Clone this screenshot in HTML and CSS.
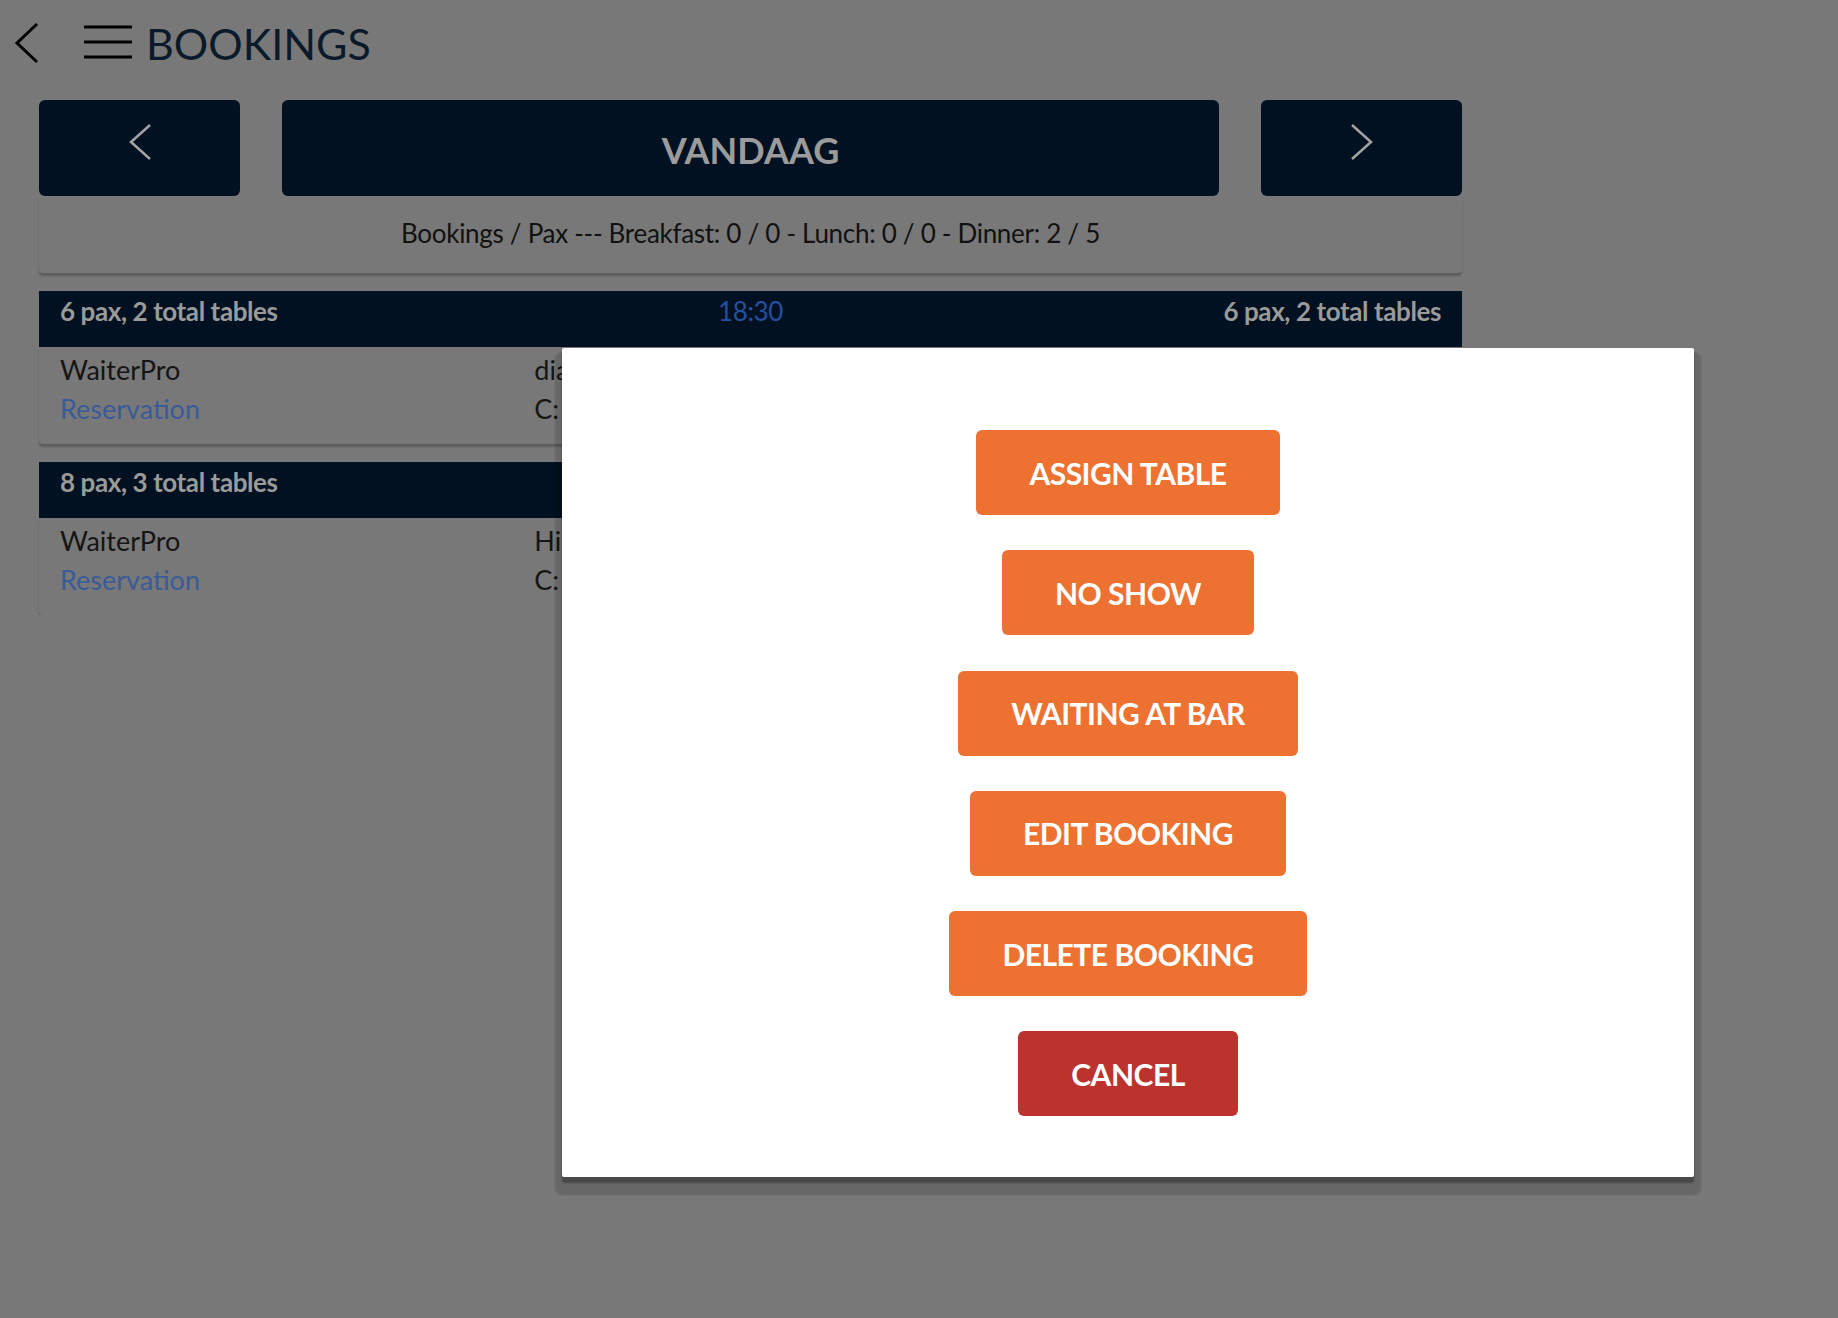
FILE: index.html
```html
<!DOCTYPE html>
<html lang="en">
<head>
  <meta charset="UTF-8">
  <meta name="viewport" content="width=device-width, initial-scale=1.0">
  <title>Bookings</title>
  <link rel="stylesheet" href="styles.css">
</head>
<body>
  <div class="topbar">
    <svg class="back-icon" width="26" height="42" viewBox="0 0 26 42">
      <polyline points="23,2 3,21 23,40" fill="none" stroke="#000" stroke-width="3"/>
    </svg>
    <svg class="menu-icon" width="48" height="36" viewBox="0 0 48 36">
      <line x1="0" y1="2" x2="48" y2="2" stroke="#000" stroke-width="3"/>
      <line x1="0" y1="17" x2="48" y2="17" stroke="#000" stroke-width="3"/>
      <line x1="0" y1="32" x2="48" y2="32" stroke="#000" stroke-width="3"/>
    </svg>
    <span class="page-title">BOOKINGS</span>
  </div>

  <div class="page">
    <div class="day-nav">
      <button class="nav-btn">
        <svg width="24" height="38" viewBox="0 0 24 38">
          <polyline points="22,2 3,19 22,36" fill="none" stroke="#a3a3a3" stroke-width="2.5"/>
        </svg>
      </button>
      <button class="nav-btn nav-today">VANDAAG</button>
      <button class="nav-btn">
        <svg width="24" height="38" viewBox="0 0 24 38">
          <polyline points="2,2 21,19 2,36" fill="none" stroke="#a3a3a3" stroke-width="2.5"/>
        </svg>
      </button>
    </div>

    <div class="card summary">
      Bookings / Pax --- Breakfast: 0 / 0 - Lunch: 0 / 0 - Dinner: 2 / 5
    </div>

    <div class="group">
      <div class="group-head">
        <span>6 pax, 2 total tables</span>
        <span class="time">18:30</span>
        <span class="right">6 pax, 2 total tables</span>
      </div>
      <div class="card booking">
        <div class="col">
          <div class="name">WaiterPro</div>
          <div class="source">Reservation</div>
        </div>
        <div class="col">
          <div class="name">diana</div>
          <div class="meta">C: 2</div>
        </div>
        <div class="col">
          <div class="name">18:30</div>
          <div class="meta">T: 4</div>
        </div>
      </div>
    </div>

    <div class="group">
      <div class="group-head">
        <span>8 pax, 3 total tables</span>
        <span class="time">19:00</span>
        <span class="right">8 pax, 3 total tables</span>
      </div>
      <div class="card booking">
        <div class="col">
          <div class="name">WaiterPro</div>
          <div class="source">Reservation</div>
        </div>
        <div class="col">
          <div class="name">Hilde</div>
          <div class="meta">C: 3</div>
        </div>
        <div class="col">
          <div class="name">19:00</div>
          <div class="meta">T: 6</div>
        </div>
      </div>
    </div>
  </div>

  <div class="modal">
    <button class="action">ASSIGN TABLE</button>
    <button class="action">NO SHOW</button>
    <button class="action">WAITING AT BAR</button>
    <button class="action">EDIT BOOKING</button>
    <button class="action">DELETE BOOKING</button>
    <button class="action cancel">CANCEL</button>
  </div>
</body>
</html>
```

FILE: styles.css
```css
body {
  margin: 0;
  background-color: #787878;
  font-family: Lato, "Open Sans", sans-serif;
  color: #151515;
}
.topbar {
  display: flex;
  align-items: center;
  height: 100px;
  padding-left: 14px;
  box-sizing: border-box;
  padding-bottom: 14px;
}
.back-icon {
  margin-right: 44px;
}
.menu-icon {
  margin-right: 14px;
}
.page-title {
  font-size: 43px;
  color: #0b1a2a;
  line-height: 1;
}
.page {
  width: 1423px;
  margin-left: 39px;
}
.day-nav {
  display: flex;
  gap: 42px;
  height: 96px;
}
.nav-btn {
  width: 201px;
  background-color: #021121;
  border: none;
  border-radius: 6px;
  padding: 0;
  display: flex;
  align-items: center;
  justify-content: center;
  padding-bottom: 12px;
}
.nav-today {
  flex: 1;
  font-family: Lato, sans-serif;
  font-size: 36px;
  font-weight: bold;
  color: #9b9b9b;
  padding-bottom: 0;
  padding-top: 4px;
}
.card {
  background-color: #787878;
  border-radius: 4px;
  box-shadow: 0 3px 2px rgba(0, 0, 0, 0.22);
}
.summary {
  text-align: center;
  font-size: 26px;
  line-height: 39px;
  letter-spacing: -0.3px;
  padding: 18px 0 20px;
  color: #111;
}
.group {
  margin-top: 18px;
}
.group-head {
  display: flex;
  justify-content: space-between;
  height: 56px;
  line-height: 40px;
  padding: 0 21px;
  background-color: #021121;
  color: #9a9a9a;
  font-size: 26px;
  font-weight: bold;
  letter-spacing: -0.4px;
  position: relative;
}
.group-head .time {
  position: absolute;
  left: 0;
  right: 0;
  text-align: center;
  color: #2450a0;
  font-weight: normal;
}
.booking {
  display: grid;
  grid-template-columns: repeat(3, 1fr);
  padding: 3px 0 16px;
  font-size: 27px;
  line-height: 39px;
  border-radius: 0 0 4px 4px;
}
.col {
  padding-left: 21px;
}
.source {
  color: #3a5b98;
}
.modal {
  position: absolute;
  left: 562px;
  top: 348px;
  width: 1132px;
  height: 829px;
  background-color: #fff;
  border-radius: 2px;
  box-shadow: 0 6px 2px rgba(0, 0, 0, 0.3), 0 11px 2px 7px rgba(0, 0, 0, 0.14);
  display: flex;
  flex-direction: column;
  align-items: center;
  padding-top: 82px;
  box-sizing: border-box;
  gap: 35.3px;
}
.action {
  flex: none;
  height: 85px;
  padding: 0 53px;
  border: none;
  border-radius: 6px;
  background-color: #ed7130;
  color: #fff;
  font-family: Lato, sans-serif;
  font-size: 30px;
  font-weight: bold;
  letter-spacing: -0.5px;
}
.cancel {
  background-color: #bb332c;
}
```
